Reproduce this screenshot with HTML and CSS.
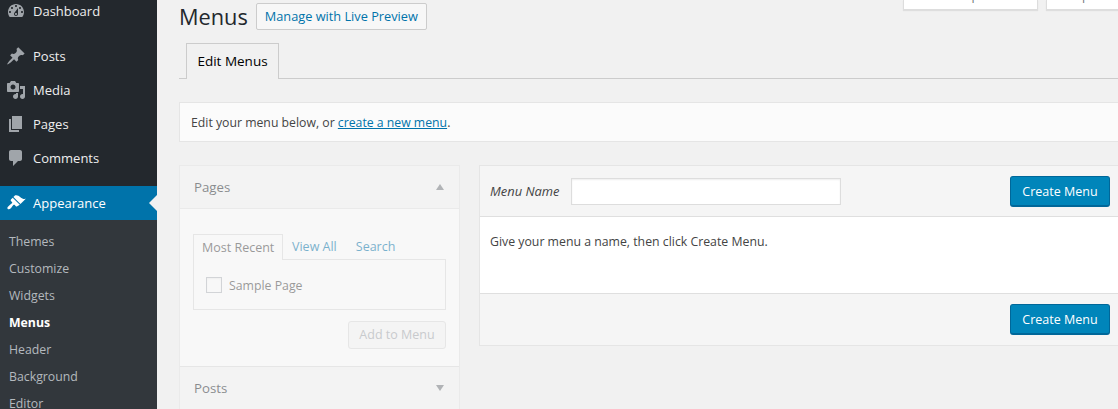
FILE: index.html
```html
<!DOCTYPE html>
<html lang="en">
<head>
<meta charset="utf-8">
<title>Menus</title>
<link rel="stylesheet" href="styles.css">
</head>
<body>
<div class="app">
  <nav class="sidebar">
    <ul class="menu">
      <li class="item"><svg class="ico" viewBox="0 0 20 20"><path d="M3.76 16h12.48c1.1-1.37 1.76-3.11 1.76-5 0-4.42-3.58-8-8-8s-8 3.58-8 8c0 1.89.66 3.63 1.76 5zM10 4c.55 0 1 .45 1 1s-.45 1-1 1-1-.45-1-1 .45-1 1-1zM6 6c.55 0 1 .45 1 1s-.45 1-1 1-1-.45-1-1 .45-1 1-1zm8 0c.55 0 1 .45 1 1s-.45 1-1 1-1-.45-1-1 .45-1 1-1zm-5.37 5.55L12 7v6c0 1.1-.9 2-2 2s-2-.9-2-2c0-.57.24-1.08.63-1.45zM4 10c.55 0 1 .45 1 1s-.45 1-1 1-1-.45-1-1 .45-1 1-1zm12 0c.55 0 1 .45 1 1s-.45 1-1 1-1-.45-1-1 .45-1 1-1zm-5 3c0-.55-.45-1-1-1s-1 .45-1 1 .45 1 1 1 1-.45 1-1z" fill-rule="evenodd"/></svg>Dashboard</li>
      <li class="sep"></li>
      <li class="item"><svg class="ico" viewBox="0 0 20 20"><path d="M10.44 3.02l1.82-1.82 6.36 6.35-1.83 1.82c-1.05-.68-2.48-.57-3.41.36l-.75.75c-.92.93-1.04 2.35-.35 3.41l-1.83 1.82-2.41-2.41-2.8 2.79c-.42.42-3.38 2.71-3.8 2.29s1.86-3.39 2.28-3.81l2.79-2.79L4.1 9.36l1.83-1.82c1.05.69 2.48.57 3.4-.36l.75-.75c.93-.92 1.05-2.35.36-3.41z"/></svg>Posts</li>
      <li class="item"><svg class="ico" viewBox="0 0 20 20"><path d="M13 11V4c0-.55-.45-1-1-1h-1.67L9 1H5L3.67 3H2c-.55 0-1 .45-1 1v7c0 .55.45 1 1 1h10c.55 0 1-.45 1-1zM7 4.5c1.38 0 2.5 1.12 2.5 2.5S8.38 9.5 7 9.5 4.5 8.38 4.5 7 5.62 4.5 7 4.5zM14 6h5v10.5c0 1.38-1.12 2.5-2.5 2.5S14 17.88 14 16.5s1.12-2.5 2.5-2.5c.17 0 .34.02.5.05V9h-3V6zm-4 8.05V13h2v3.5c0 1.38-1.12 2.5-2.5 2.5S7 17.88 7 16.5 8.12 14 9.5 14c.17 0 .34.02.5.05z" fill-rule="evenodd"/></svg>Media</li>
      <li class="item"><svg class="ico" viewBox="0 0 20 20"><path d="M6 15V2h10v13H6zm-1 1h8v2H3V5h2v11z"/></svg>Pages</li>
      <li class="item"><svg class="ico" viewBox="0 0 20 20"><path d="M5 2h9c1.1 0 2 .9 2 2v7c0 1.1-.9 2-2 2h-2l-5 5v-5H5c-1.1 0-2-.9-2-2V4c0-1.1.9-2 2-2z"/></svg>Comments</li>
      <li class="sep-small"></li>
      <li class="item current"><svg class="ico" viewBox="0 0 20 20"><path d="M14.48 11.06L7.41 3.99l1.5-1.5c.5-.56 2.3-.47 3.51.32 1.21.8 1.43 1.28 2.91 2.1 1.18.64 2.45 1.26 4.45.85zm-.71.71L6.7 4.7 4.93 6.47c-.39.39-.39 1.02 0 1.41l1.06 1.06c.39.39.39 1.03 0 1.42-.6.6-1.43 1.11-2.21 1.69-.35.26-.7.53-1.01.84C1.43 13.71.96 15.12 1.75 15.9c.78.79 2.19.32 3.07-.56.31-.31.58-.66.84-1.01.58-.78 1.09-1.61 1.69-2.21.39-.39 1.03-.39 1.42 0l1.06 1.06c.39.39 1.02.39 1.41 0z"/></svg>Appearance</li>
    </ul>
    <ul class="submenu">
      <li>Themes</li>
      <li>Customize</li>
      <li>Widgets</li>
      <li class="on">Menus</li>
      <li>Header</li>
      <li>Background</li>
      <li>Editor</li>
    </ul>
  </nav>
  <main class="main">
    <div class="meta">
      <div class="meta-tab wide"><span class="meta-text">Screen Options</span></div>
      <div class="meta-tab narrow"><span class="meta-text">Help</span></div>
    </div>
    <div class="title-row">
      <h1 class="title">Menus</h1>
      <a class="page-action">Manage with Live Preview</a>
    </div>
    <div class="tabs"><div class="tab">Edit Menus</div></div>
    <div class="notice">Edit your menu below, or <a class="link">create a new menu</a>.</div>
    <div class="columns">
      <section class="left">
        <div class="acc-head"><span>Pages</span><i class="tri up"></i></div>
        <div class="acc-body">
          <div class="inner-tabs">
            <span class="inner-tab">Most Recent</span>
            <span class="inner-link first">View All</span>
            <span class="inner-link">Search</span>
          </div>
          <div class="inner-panel"><span class="check"></span><span>Sample Page</span></div>
          <div class="add-row"><span class="add">Add to Menu</span></div>
        </div>
        <div class="acc-head posts"><span>Posts</span><i class="tri down"></i></div>
      </section>
      <section class="right">
        <div class="box-head">
          <label class="name-label">Menu Name</label>
          <span class="name-input"></span>
          <span class="primary">Create Menu</span>
        </div>
        <div class="box-body">Give your menu a name, then click Create Menu.</div>
        <div class="box-foot"><span class="primary">Create Menu</span></div>
      </section>
    </div>
  </main>
</div>
</body>
</html>
```
FILE: styles.css
```css
* { box-sizing: border-box; }
html, body { margin: 0; padding: 0; }
body { font-family: "Open Sans", "Noto Sans", sans-serif; font-size: 12.25px; color: #444; background: #f1f1f1; }
ul { list-style: none; margin: 0; padding: 0; }
.app { display: flex; width: 1118px; height: 409px; overflow: hidden; background: #f1f1f1; }

.sidebar { flex: 0 0 157px; background: #23282d; overflow: hidden; }
.menu { margin-top: -6px; }
.item { position: relative; display: flex; align-items: center; height: 34px; padding-left: 6px; color: #eee; font-size: 13px; }
.ico { width: 20px; height: 20px; margin-right: 7px; fill: #a0a5aa; flex: none; }
.sep { height: 11px; }
.sep-small { height: 11px; }
.current { background: #0073aa; color: #fff; }
.current .ico { fill: #fff; }
.current::after { content: ""; position: absolute; right: 0; top: 9px; border: 8px solid transparent; border-right-color: #f1f1f1; border-left-width: 0; }
.submenu { background: #32373c; padding-top: 8px; height: 200px; }
.submenu li { height: 27px; line-height: 27px; padding-left: 9px; color: #b4b9be; font-size: 12.3px; }
.submenu .on { color: #fff; font-weight: 700; }

.main { flex: 1 1 auto; min-width: 0; padding-left: 22px; }
.meta { display: flex; justify-content: flex-end; gap: 8px; height: 10px; margin-right: -12px; }
.meta-tab { height: 10px; padding-left: 16px; background: #fff; border: 1px solid #ddd; border-top: 0; box-shadow: 0 1px 1px rgba(0,0,0,.08); overflow: hidden; color: #72777c; white-space: nowrap; }
.meta-text { display: block; margin-top: -13px; line-height: 17px; }
.wide { width: 135px; }
.narrow { width: 84px; }
.title-row { display: flex; align-items: center; margin-top: -7px; height: 27px; }
.title { margin: 0; font-size: 21.75px; font-weight: 400; color: #23282d; line-height: 27px; }
.page-action { margin-left: 8px; width: 171px; height: 27px; line-height: 25px; text-align: center; border: 1px solid #ccc; border-radius: 2px; background: #f7f7f7; color: #0073aa; font-weight: 500; font-size: 12.75px; }
.tabs { margin-top: 13px; height: 36px; padding-left: 7px; border-bottom: 1px solid #ccc; }
.tab { width: 93px; height: 36px; line-height: 34px; text-align: center; border: 1px solid #ccc; border-bottom: 0; background: #f1f1f1; color: #000; font-weight: 500; font-size: 13.5px; }
.notice { margin-top: 23px; margin-right: -10px; height: 40px; line-height: 40px; padding-left: 11px; background: #fbfbfb; border: 1px solid #e5e5e5; border-width: 1px 0 1px 1px; }
.link { color: #0073aa; text-decoration: underline; }
.columns { display: flex; gap: 19px; margin-top: 23px; margin-right: -2px; align-items: flex-start; }

.left { flex: 0 0 281px; border: 1px solid #e5e5e5; background: #fff; opacity: .5; }
.acc-head { display: flex; justify-content: space-between; align-items: center; height: 43px; padding: 0 15px 0 14px; background: #f5f5f5; border-bottom: 1px solid #e5e5e5; color: #23282d; font-size: 13.25px; font-weight: 500; }
.posts { border-top: 1px solid #ddd; height: 44px; }
.tri { width: 0; height: 0; border-left: 4.5px solid transparent; border-right: 4.5px solid transparent; }
.up { border-bottom: 6px solid #72777c; }
.down { border-top: 6px solid #72777c; }
.acc-body { padding: 24px 13px 0; height: 157px; font-size: 12.5px; }
.inner-tabs { display: flex; height: 26px; align-items: center; }
.inner-tab { height: 26px; line-height: 25px; padding-left: 8px; width: 90px; border: 1px solid #ddd; border-bottom: 0; background: #fff; margin-bottom: -1px; white-space: nowrap; color: #444; position: relative; }
.inner-link { color: #0073aa; margin-left: 19px; }
.inner-link.first { margin-left: 9px; }
.inner-panel { display: flex; align-items: center; height: 51px; padding: 1px 0 0 12px; border: 1px solid #ddd; gap: 7px; color: #444; font-size: 12.3px; }
.check { width: 16px; height: 16px; border: 1px solid #b4b9be; background: #fff; box-shadow: inset 0 1px 2px rgba(0,0,0,.07); }
.add-row { display: flex; justify-content: flex-end; margin-top: 11px; }
.add { height: 28px; line-height: 26px; width: 98px; text-align: center; border: 1px solid #ddd; border-radius: 3px; background: #f7f7f7; color: #a0a5aa; }

.right { flex: 1 1 auto; min-width: 0; border: 1px solid #e5e5e5; background: #fff; height: 181px; display: flex; flex-direction: column; }
.box-head { display: flex; align-items: center; height: 51px; padding-left: 10px; padding-right: 9px; background: #f5f5f5; border-bottom: 1px solid #dfdfdf; }
.name-label { font-style: italic; width: 81px; font-size: 12.9px; }
.name-input { width: 270px; height: 27px; background: #fff; border: 1px solid #ddd; box-shadow: inset 0 1px 2px rgba(0,0,0,.07); }
.primary { margin-left: auto; width: 100px; height: 31px; line-height: 29px; text-align: center; color: #fff; background: #0085ba; border: 1px solid #006799; border-bottom-width: 2px; border-radius: 3px; font-size: 12.5px; }
.box-body { height: 76px; padding: 16px 10px; background: #fff; font-size: 12.3px; }
.box-foot { flex: 1; display: flex; align-items: center; padding-right: 9px; background: #f5f5f5; border-top: 1px solid #dfdfdf; }
```
